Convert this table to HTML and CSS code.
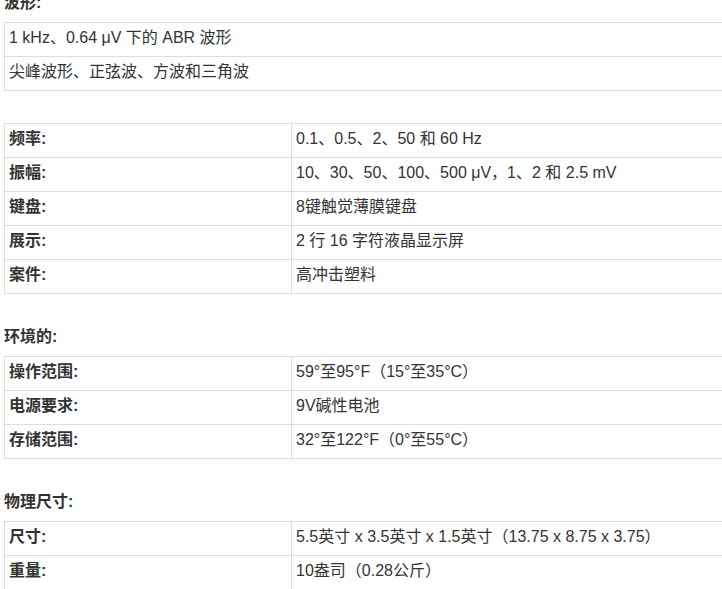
FILE: index.html
```html
<!DOCTYPE html>
<html lang="zh-CN">
<head>
<meta charset="utf-8">
<title>规格</title>
<link rel="stylesheet" href="styles.css">
</head>
<body>
<div class="page">
  <h4 class="sec-title">波形:</h4>
  <table class="spec single">
    <tr><td>1 kHz、0.64 μV 下的 ABR 波形</td></tr>
    <tr><td>尖峰波形、正弦波、方波和三角波</td></tr>
  </table>

  <table class="spec">
    <colgroup><col class="c-label"><col></colgroup>
    <tr><th>频率:</th><td>0.1、0.5、2、50 和 60 Hz</td></tr>
    <tr><th>振幅:</th><td>10、30、50、100、500 μV，1、2 和 2.5 mV</td></tr>
    <tr><th>键盘:</th><td>8键触觉薄膜键盘</td></tr>
    <tr><th>展示:</th><td>2 行 16 字符液晶显示屏</td></tr>
    <tr><th>案件:</th><td>高冲击塑料</td></tr>
  </table>

  <h4 class="sec-title">环境的:</h4>
  <table class="spec">
    <colgroup><col class="c-label"><col></colgroup>
    <tr><th>操作范围:</th><td>59°至95°F（15°至35°C）</td></tr>
    <tr><th>电源要求:</th><td>9V碱性电池</td></tr>
    <tr><th>存储范围:</th><td>32°至122°F（0°至55°C）</td></tr>
  </table>

  <h4 class="sec-title">物理尺寸:</h4>
  <table class="spec">
    <colgroup><col class="c-label"><col></colgroup>
    <tr><th>尺寸:</th><td>5.5英寸 x 3.5英寸 x 1.5英寸（13.75 x 8.75 x 3.75）</td></tr>
    <tr><th>重量:</th><td>10盎司（0.28公斤）</td></tr>
  </table>
</div>
</body>
</html>
```
FILE: styles.css
```css
html, body {
  margin: 0;
  padding: 0;
  background: #fff;
  overflow: hidden;
}
body {
  font-family: "Liberation Sans", Arial, "Noto Sans CJK SC", sans-serif;
  font-size: 16px;
  color: #333;
}
.page {
  padding-left: 4px;
  margin-top: -8px;
  width: 740px;
}
.sec-title {
  margin: 0 0 8px 0;
  font-size: 16px;
  line-height: 22px;
  font-weight: bold;
  color: #333;
}
.spec {
  width: 720px;
  border-collapse: collapse;
  table-layout: fixed;
  margin-bottom: 32px;
}
.spec .c-label {
  width: 287px;
}
.spec th,
.spec td {
  border: 1px solid #ddd;
  padding: 2px 4px 6px 4px;
  line-height: 25px;
  text-align: left;
  vertical-align: top;
  white-space: nowrap;
}
.spec th {
  font-weight: bold;
}
.spec td {
  font-weight: normal;
}
```
